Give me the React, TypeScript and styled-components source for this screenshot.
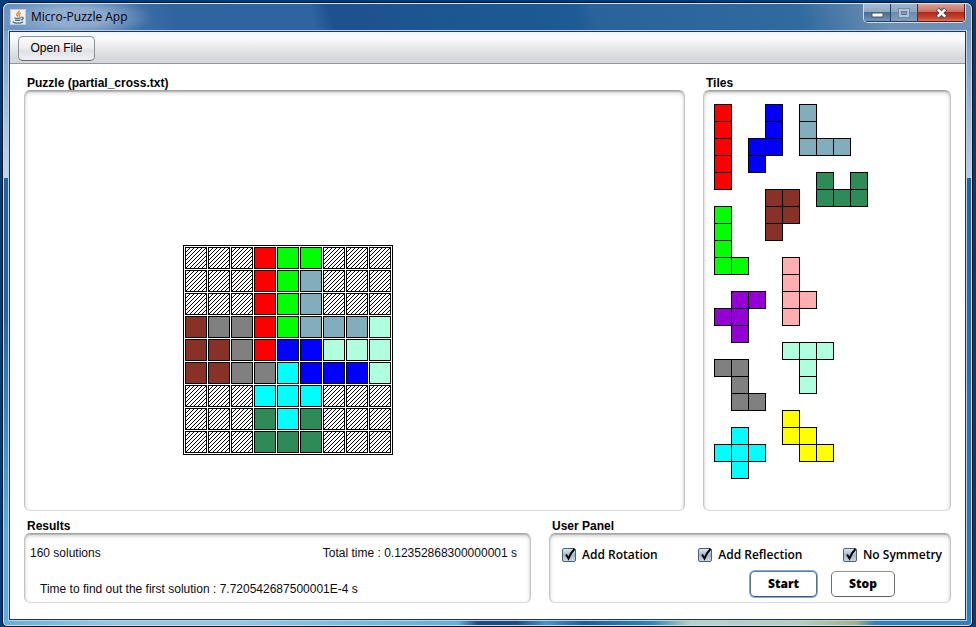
import React from "react";
import styled, { createGlobalStyle, css } from "styled-components";

const GlobalStyle = createGlobalStyle`
  * { box-sizing: border-box; }
  html, body { margin: 0; padding: 0; }
  body {
    font-family: "Liberation Sans", Arial, sans-serif;
    font-size: 12px;
    color: #000;
  }
`;

const Desktop = styled.div`
  min-height: 100vh;
  display: flex;
  padding: 2px 3px 0 2px;
  background: linear-gradient(90deg, #013c7c, #003a78 50%, #013c7c);
`;

const Frame = styled.div`
  flex: 1;
  display: flex;
  flex-direction: column;
  padding: 0 6px 6px;
  border: 1px solid #0a1524;
  border-radius: 7px 7px 5px 5px;
  box-shadow: inset 0 0 0 1px #c9dcef;
  background:
    linear-gradient(
        90deg, #62b0dc 0, #8ccaec 11%, #8ccaec 24%, #60b0de 47%, #1b4b87 49%, #1b4b87 53%,
        #4795cc 56%, #1c5f9a 60%, #2b88b8 67%, #b4d5c0 71%, #b2d2bc 82%, #a3b380 88%, #2f80c0 90%
      ) 0 100% / 100% 6px no-repeat,
    linear-gradient(#6e97c6 0, #c2d7ec 175px, #2465a1 175px, #2465a1 50%, #5aaedb 85%) 0 0 / 50% 100% no-repeat,
    linear-gradient(#7191b8 0, #b9cfe6 175px, #2163a0 175px, #2b80bf 100%) 100% 0 / 50% 100% no-repeat;
  background-clip: padding-box;
`;

const TitleBar = styled.header`
  display: flex;
  align-items: center;
  height: 28px;
  margin: 0 -6px;
  padding: 0 0 1px 6px;
  border-top: 1px solid #d4e4f4;
  border-left: 1px solid #c9dcef;
  border-right: 1px solid #c9dcef;
  border-radius: 6px 6px 0 0;
  background:
    radial-gradient(ellipse 76px 22px at 72px 13px, #a9bfdab0 40%, #8fadd000 100%),
    linear-gradient(75deg, #6d93c2 0, #5f88ba 5%, #2f649f 18%, #2f649f 32%, #1d528c 34%,
      #1c5b95 59%, #29639a 61%, #306a9f 82%, #6c8fb4 91%, #7191b8 100%);
`;

const Title = styled.h1`
  flex: 1;
  margin: 0 0 0 5px;
  font: 400 12px/16px "Open Sans", "Noto Sans", sans-serif;
`;

const WindowControls = styled.div`
  display: flex;
  align-self: flex-start;
  height: 19px;
  margin-right: 5px;
  border: 1px solid #cfdeec;
  border-top: 0;
  border-radius: 0 0 5px 5px;
  overflow: hidden;
`;

const ControlButton = styled.button<{ $kind: "plain" | "dim" | "close" }>`
  display: flex;
  align-items: center;
  justify-content: center;
  width: 27px;
  height: 18px;
  padding: 0;
  border: 1px solid #24415f;
  border-top: 0;
  border-left-width: 0;
  background: linear-gradient(#a9bdd3 0, #8ea8c4 45%, #4b6d94 50%, #7393b6 100%);
  ${({ $kind }) =>
    $kind === "plain" &&
    css`
      padding-top: 5px;
    `}
  ${({ $kind }) =>
    $kind === "dim" &&
    css`
      background: linear-gradient(#9db3cb 0, #8ba5c1 45%, #6c8cad 50%, #7f9cba 100%);
    `}
  ${({ $kind }) =>
    $kind === "close" &&
    css`
      width: 47px;
      border-color: #5a1c1c;
      background: linear-gradient(#dda297 0, #c96f62 45%, #b02a18 50%, #c8432c 80%, #d5745a 100%);
    `}
`;

const Client = styled.main`
  flex: 1;
  display: flex;
  flex-direction: column;
  border: 1px solid #23364c;
  outline: 1px solid #b9d0e6;
  background: #fff;
`;

const Toolbar = styled.div`
  display: flex;
  align-items: center;
  height: 32px;
  padding: 1px 8px 0;
  border-bottom: 1px solid #94969c;
  background: linear-gradient(#f4f5f7 0, #fbfbfc 20%, #e6e7ea 55%, #d5d7dc 85%, #d6d8dd 100%);
`;

const PushButton = styled.button<{ $tone: "silver" | "white"; $focused?: boolean; $width: number }>`
  width: ${({ $width }) => $width}px;
  height: 25px;
  padding: 0;
  border: 1px solid #8b8f96;
  border-bottom-color: #62666c;
  border-radius: 5px;
  color: #000;
  font: 400 12px/16px "Liberation Sans", Arial, sans-serif;
  background: linear-gradient(#fafafb 0, #eeeff1 45%, #dfe1e5 60%, #eff0f3 100%);
  ${({ $tone }) =>
    $tone === "white" &&
    css`
      height: 26px;
      border-color: #8f8f94 #6d6f74 #5c5e63;
      background: #fff;
      font: 800 12px/16px "Open Sans", "Noto Sans", sans-serif;
    `}
  ${({ $focused }) =>
    $focused &&
    css`
      border-color: #5d7ea6 #55708f #45566b;
      box-shadow: 0 0 0 1px #7facdb;
    `}
`;

const Content = styled.div`
  flex: 1;
  display: flex;
  flex-direction: column;
  gap: 8px;
  padding: 12px 14px 16px;
`;

const Row = styled.div<{ $columns: string; $grow?: boolean }>`
  display: grid;
  grid-template-columns: ${({ $columns }) => $columns};
  gap: 18px;
  ${({ $grow }) => $grow && "flex: 1;"}
`;

const Panel = styled.section`
  display: flex;
  flex-direction: column;
  min-width: 0;
`;

const PanelTitle = styled.h2`
  margin: 0 3px;
  font-size: 12px;
  font-weight: 700;
  line-height: 14px;
`;

const PanelBody = styled.div<{ $padding: string }>`
  flex: 1;
  padding: ${({ $padding }) => $padding};
  border: 1px solid #c4c4c4;
  border-top-color: #a4a4a4;
  border-bottom-color: #dcdcdc;
  border-radius: 6px;
  box-shadow: inset 0 1px 1px #b4b4b4, inset 0 2px 4px #d2d2d2;
`;

const Board = styled.div`
  display: grid;
  grid-template-columns: repeat(9, 22px);
  grid-auto-rows: 22px;
  gap: 1px;
  width: max-content;
  padding: 1px;
  border: 1px solid #000;
`;

const BoardCell = styled.div<{ $color: string }>`
  border: 1px solid #000;
  background: ${({ $color }) => $color};
`;

const HatchSvg = styled.svg`
  display: block;
  width: 100%;
  height: 100%;
`;

const TileGrid = styled.div`
  display: grid;
  grid-template-columns: repeat(9, 17px);
  grid-template-rows: repeat(22, 17px);
`;

const TileCell = styled.div<{ $col: number; $row: number; $color: string }>`
  grid-column: ${({ $col }) => $col + 1};
  grid-row: ${({ $row }) => $row + 1};
  margin: 0 -1px -1px 0;
  border: 1px solid #000;
  background: ${({ $color }) => $color};
`;

const ResultLine = styled.div<{ $indent?: boolean }>`
  display: flex;
  justify-content: space-between;
  padding: ${({ $indent }) => ($indent ? "22px 0 0 10px" : "0")};
  line-height: 14px;
  color: #0b0b14;
`;

const Options = styled.div`
  display: flex;
  justify-content: space-between;
`;

const CheckLabel = styled.label`
  position: relative;
  display: flex;
  align-items: center;
  gap: 6px;
  font: 600 12px/16px "Open Sans", "Noto Sans", sans-serif;
`;

const CheckInput = styled.input`
  appearance: none;
  width: 14px;
  height: 14px;
  margin: 0;
  border: 1px solid #4d6076;
  border-radius: 2px;
  background: linear-gradient(#dde6ef, #a6b9cc 50%, #c6d6e4);
`;

const CheckMark = styled.svg`
  position: absolute;
  left: 2px;
  top: 0;
  display: none;
  pointer-events: none;
  ${CheckInput}:checked + & {
    display: block;
  }
`;

const Actions = styled.div`
  display: flex;
  justify-content: flex-end;
  gap: 14px;
  padding: 8px 47px 0 0;
`;

const colors: Record<string, string> = {
  R: "#ff0000",
  G: "#00ff00",
  S: "#82adbd",
  B: "#0000ff",
  N: "#873224",
  Y: "#808080",
  M: "#afffdf",
  C: "#00ffff",
  D: "#2e8b57",
  P: "#ffafaf",
  V: "#9400d3",
  L: "#ffff00",
};

const boardRows = [
  "...RGG...",
  "...RGS...",
  "...RGS...",
  "NYYRGSSSM",
  "NNYRBBMMM",
  "NNYYCBBBM",
  "...CCC...",
  "...DCD...",
  "...DDD...",
];

const tileRows = [
  "R..B.S...",
  "R..B.S...",
  "R.BB.SSS.",
  "R.B......",
  "R.....D.D",
  "...NN.DDD",
  "G..NN....",
  "G..N.....",
  "G........",
  "GG..P....",
  "....P....",
  ".VV.PP...",
  "VV..P....",
  ".V.......",
  "....MMM..",
  "YY...M...",
  ".Y...M...",
  ".YY......",
  "....L....",
  ".C..LL...",
  "CCC..LL..",
  ".C.......",
];

function Hatch() {
  return (
    <HatchSvg shapeRendering="crispEdges" aria-hidden="true">
      <defs>
        <pattern id="hatch" width="4" height="4" patternUnits="userSpaceOnUse">
          <path d="M3 0h1v1h-1z M2 1h1v1h-1z M1 2h1v1h-1z M0 3h1v1h-1z" fill="#000" />
        </pattern>
      </defs>
      <rect width="100%" height="100%" fill="url(#hatch)" />
    </HatchSvg>
  );
}

function JavaIcon() {
  return (
    <svg width="16" height="16" viewBox="0 0 16 16" aria-hidden="true">
      <rect x="0.5" y="0.5" width="15" height="15" fill="#f1f2f3" stroke="#c3cbd3" />
      <path d="M9 1.500c1 1.800-3 2.500-2.300 4.300.3.700 1.100 1.100 1 1.900M10.800 4c-2.200.8-2.400 1.600-1.400 2.700.4.600.1 1-.5 1.400" fill="none" stroke="#e8832a" strokeWidth="1.400" />
      <path d="M4.300 8.800c1.500.9 5.200.9 6.800 0M5 10.800c1.400.6 4 .6 5.400 0M11.300 8.300c2.700-.4 2.400 2.200-.3 2.800M3.500 12.400c-1.500.9 1 1.700 4.300 1.700s5.800-.7 4.600-1.700" fill="none" stroke="#46708f" strokeWidth="1.300" />
    </svg>
  );
}

function Option({ label }: { label: string }) {
  return (
    <CheckLabel>
      <CheckInput type="checkbox" defaultChecked />
      <CheckMark width="13" height="14" viewBox="0 0 13 14">
        <path d="M2 7.500 4.500 11.500C6 7.500 7.500 5 10.500 2" fill="none" stroke="#000" strokeWidth="2" />
      </CheckMark>
      {label}
    </CheckLabel>
  );
}

export default function App() {
  return (
    <Desktop>
      <GlobalStyle />
      <Frame>
        <TitleBar>
          <JavaIcon />
          <Title>Micro-Puzzle App</Title>
          <WindowControls>
            <ControlButton $kind="plain" aria-label="Minimize">
              <svg width="13" height="6" viewBox="0 0 13 6">
                <rect x="1" y="1" width="11" height="4" fill="#fff" stroke="#4b5566" />
              </svg>
            </ControlButton>
            <ControlButton $kind="dim" aria-label="Maximize">
              <svg width="12" height="10" viewBox="0 0 12 10">
                <rect x="0.5" y="0.5" width="11" height="9" fill="#b3c3d4" stroke="#7289a2" />
                <rect x="3.500" y="3.500" width="5" height="3" fill="#7e99b6" stroke="#637c98" />
              </svg>
            </ControlButton>
            <ControlButton $kind="close" aria-label="Close">
              <svg width="13" height="12" viewBox="0 0 13 12">
                <path d="M2.500 2 10.500 10M10.500 2 2.500 10" stroke="#4b4552" strokeWidth="4.500" />
                <path d="M2.800 2.300 10.200 9.700M10.200 2.300 2.800 9.700" stroke="#fff" strokeWidth="2.600" />
              </svg>
            </ControlButton>
          </WindowControls>
        </TitleBar>
        <Client>
          <Toolbar>
            <PushButton $tone="silver" $width={77}>Open File</PushButton>
          </Toolbar>
          <Content>
            <Row $columns="661fr 248fr" $grow>
              <Panel>
                <PanelTitle>Puzzle (partial_cross.txt)</PanelTitle>
                <PanelBody $padding="154px 158px 0">
                  <Board>
                    {boardRows.flatMap((row, r) =>
                      [...row].map((key, c) => (
                        <BoardCell key={`${r}-${c}`} $color={colors[key] ?? "#fff"}>
                          {key === "." && <Hatch />}
                        </BoardCell>
                      ))
                    )}
                  </Board>
                </PanelBody>
              </Panel>
              <Panel>
                <PanelTitle>Tiles</PanelTitle>
                <PanelBody $padding="13px 10px 0">
                  <TileGrid>
                    {tileRows.flatMap((row, r) =>
                      [...row].map((key, c) =>
                        key === "." ? null : (
                          <TileCell key={`${r}-${c}`} $col={c} $row={r} $color={colors[key]} />
                        )
                      )
                    )}
                  </TileGrid>
                </PanelBody>
              </Panel>
            </Row>
            <Row $columns="507fr 402fr">
              <Panel>
                <PanelTitle>Results</PanelTitle>
                <PanelBody $padding="12px 13px 6px 5px">
                  <ResultLine>
                    <span>160 solutions</span>
                    <span>Total time : 0.12352868300000001 s</span>
                  </ResultLine>
                  <ResultLine $indent>Time to find out the first solution : 7.720542687500001E-4 s</ResultLine>
                </PanelBody>
              </Panel>
              <Panel>
                <PanelTitle>User Panel</PanelTitle>
                <PanelBody $padding="13px 8px 3px 12px">
                  <Options>
                    <Option label="Add Rotation" />
                    <Option label="Add Reflection" />
                    <Option label="No Symmetry" />
                  </Options>
                  <Actions>
                    <PushButton $tone="white" $focused $width={67}>Start</PushButton>
                    <PushButton $tone="white" $width={64}>Stop</PushButton>
                  </Actions>
                </PanelBody>
              </Panel>
            </Row>
          </Content>
        </Client>
      </Frame>
    </Desktop>
  );
}
